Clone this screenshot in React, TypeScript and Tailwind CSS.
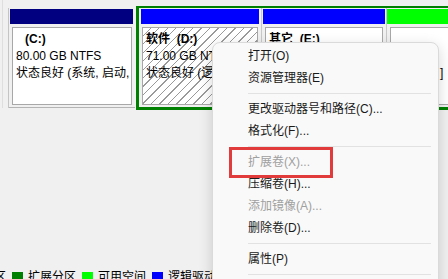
import React from "react";

const font = "font-['Liberation_Sans','Noto_Sans_CJK_SC',sans-serif]";

type Item = { label: string; disabled?: boolean } | "sep";

const menuItems: Item[] = [
  { label: "打开(O)" },
  { label: "资源管理器(E)" },
  "sep",
  { label: "更改驱动器号和路径(C)..." },
  { label: "格式化(F)..." },
  "sep",
  { label: "扩展卷(X)...", disabled: true },
  { label: "压缩卷(H)..." },
  { label: "添加镜像(A)...", disabled: true },
  { label: "删除卷(D)..." },
  "sep",
  { label: "属性(P)" },
  "sep",
  { label: "帮助(H)" },
];

function ContextMenu() {
  return (
    <div className="absolute left-[212px] top-[42px] w-[227px] rounded-[8px] border border-[#dadada] bg-[#f9f9f9] pt-[2px] shadow-[0_4px_14px_rgba(0,0,0,0.16)]">
      {menuItems.map((item, i) =>
        item === "sep" ? (
          <div key={i} className="flex h-[9px] items-center">
            <div className="ml-[35px] mr-[7px] h-px flex-1 bg-[#e2e2e2]" />
          </div>
        ) : (
          <div
            key={i}
            className={`flex h-[22px] items-center pl-[35px] text-[12px] ${
              item.disabled ? "text-[#a0a0a0]" : "text-[#1a1a1a]"
            }`}
          >
            {item.label}
          </div>
        )
      )}
    </div>
  );
}

function LegendSwatch({ color, label }: { color: string; label: string }) {
  return (
    <div className="flex items-center gap-[5px]">
      <div className={`h-[11px] w-[11px] ${color}`} />
      <span className="whitespace-nowrap">{label}</span>
    </div>
  );
}

export default function App() {
  return (
    <div className={`relative h-[279px] w-[448px] overflow-hidden bg-[#f0f0f0] text-[12px] text-black ${font}`}>
      {/* disk row */}
      <div className="flex h-[111px]">
        {/* disk label column edge */}
        <div className="flex w-[9px]">
          <div className="ml-[2px] h-[108px] w-px bg-[#dedede]" />
          <div className="ml-[5px] mt-[8px] h-[100px] w-px bg-[#c4c4c4]" />
        </div>

        {/* C: primary partition */}
        <div className="flex w-[127px] flex-col pt-[9px]">
          <div className="ml-px h-[15px] w-[123px] bg-[#000080]" />
          <div className="flex h-[84px] w-[126px] flex-col border-b border-[#b4b4b4] pl-[3px] pt-[3px]">
            <div className="h-[78px] w-[120px] overflow-hidden whitespace-nowrap border border-[#a8a8a8] bg-white pl-[3px] pt-[3px] leading-[17px]">
              <div className="pl-[9px] font-bold">(C:)</div>
              <div>80.00 GB NTFS</div>
              <div>状态良好 (系统, 启动, 页面文件, 活动, 主分区)</div>
            </div>
          </div>
        </div>

        {/* extended partition */}
        <div className="mt-[6px] flex h-[104px] flex-1 border-b-[3px] border-l-[3px] border-t-2 border-[#008000]">
          {/* D: selected logical drive */}
          <div className="flex w-[122px] flex-col pt-px">
            <div className="ml-[2px] h-[15px] w-[118px] bg-[#0000ff]" />
            <div className="ml-[3px] mt-[3px] h-[78px] w-[116px] overflow-hidden whitespace-nowrap border border-[#a8a8a8] bg-[repeating-linear-gradient(135deg,#ffffff_0px,#ffffff_5px,#9a9a9a_5px,#9a9a9a_6px)] pl-[3px] pt-[3px] leading-[17px]">
              <div className="font-bold">软件&nbsp;&nbsp;(D:)</div>
              <div>71.00 GB NTFS</div>
              <div>状态良好 (逻辑驱动器)</div>
            </div>
          </div>
          <div className="w-px bg-[#c8c8c8]" />
          {/* E: logical drive */}
          <div className="flex w-[124px] flex-col pt-px">
            <div className="ml-px h-[15px] w-[122px] bg-[#0000ff]" />
            <div className="ml-[3px] mt-[3px] h-[78px] w-[118px] overflow-hidden whitespace-nowrap border border-[#a8a8a8] bg-white pl-[3px] pt-[3px] leading-[17px]">
              <div className="font-bold">其它&nbsp;&nbsp;(E:)</div>
              <div>80.00 GB NTFS</div>
              <div>状态良好 (逻辑驱动器)</div>
            </div>
          </div>
          <div className="w-px bg-[#c8c8c8]" />
          {/* free space */}
          <div className="flex flex-1 flex-col pt-px">
            <div className="h-[15px] bg-[#00ff00]" />
            <div className="ml-[3px] mt-[3px] h-[78px] overflow-hidden whitespace-nowrap border border-r-0 border-[#a8a8a8] bg-white pl-[3px] pt-[3px] leading-[17px]">
              <div>&nbsp;</div>
              <div>&nbsp;</div>
              <div className="pl-[46px]">]</div>
            </div>
          </div>
        </div>
      </div>

      {/* legend */}
      <div className="ml-[-46px] mt-[159px] flex h-[14px] items-center gap-[6px] leading-[14px]">
        <LegendSwatch color="bg-[#000080]" label="主分区" />
        <LegendSwatch color="bg-[#008000]" label="扩展分区" />
        <LegendSwatch color="bg-[#00ff00]" label="可用空间" />
        <LegendSwatch color="bg-[#0000ff]" label="逻辑驱动器" />
      </div>

      <ContextMenu />

      {/* annotation box */}
      <div className="absolute left-[229px] top-[147px] h-[31px] w-[104px] border-[3px] border-[#e23b3b]" />
    </div>
  );
}
